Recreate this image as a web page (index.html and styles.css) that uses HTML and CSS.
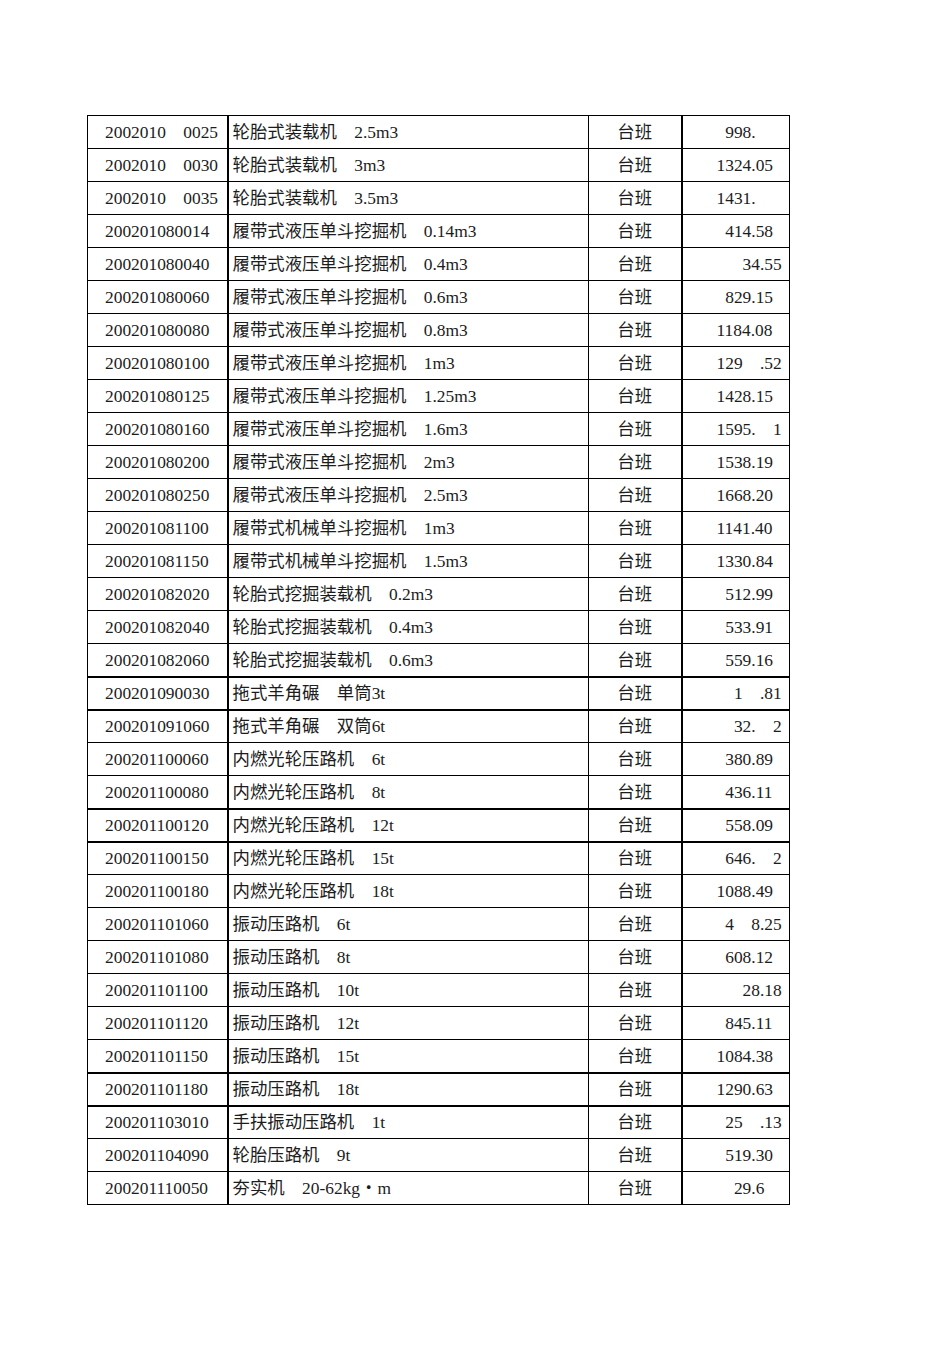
FILE: index.html
```html
<!DOCTYPE html>
<html lang="zh-CN">
<head>
<meta charset="utf-8">
<title>机械台班</title>
<link rel="stylesheet" href="styles.css">
</head>
<body>
<div class="sheet">
<table class="grid">
<colgroup><col class="c1"><col class="c2"><col class="c3"><col class="c4"></colgroup>
<tbody>
<tr><td class="code">2002010&ensp;&ensp;0025</td><td class="name">轮胎式装载机&ensp;&ensp;2.5m3</td><td class="unit">台班</td><td class="val">&ensp;998.</td></tr>
<tr><td class="code">2002010&ensp;&ensp;0030</td><td class="name">轮胎式装载机&ensp;&ensp;3m3</td><td class="unit">台班</td><td class="val">1324.05</td></tr>
<tr><td class="code">2002010&ensp;&ensp;0035</td><td class="name">轮胎式装载机&ensp;&ensp;3.5m3</td><td class="unit">台班</td><td class="val">1431.</td></tr>
<tr><td class="code">200201080014</td><td class="name">履带式液压单斗挖掘机&ensp;&ensp;0.14m3</td><td class="unit">台班</td><td class="val">&ensp;414.58</td></tr>
<tr><td class="code">200201080040</td><td class="name">履带式液压单斗挖掘机&ensp;&ensp;0.4m3</td><td class="unit">台班</td><td class="val">&ensp;&ensp;&ensp;34.55</td></tr>
<tr><td class="code">200201080060</td><td class="name">履带式液压单斗挖掘机&ensp;&ensp;0.6m3</td><td class="unit">台班</td><td class="val">&ensp;829.15</td></tr>
<tr><td class="code">200201080080</td><td class="name">履带式液压单斗挖掘机&ensp;&ensp;0.8m3</td><td class="unit">台班</td><td class="val">1184.08</td></tr>
<tr><td class="code">200201080100</td><td class="name">履带式液压单斗挖掘机&ensp;&ensp;1m3</td><td class="unit">台班</td><td class="val">129&ensp;&ensp;.52</td></tr>
<tr><td class="code">200201080125</td><td class="name">履带式液压单斗挖掘机&ensp;&ensp;1.25m3</td><td class="unit">台班</td><td class="val">1428.15</td></tr>
<tr><td class="code">200201080160</td><td class="name">履带式液压单斗挖掘机&ensp;&ensp;1.6m3</td><td class="unit">台班</td><td class="val">1595.&ensp;&ensp;1</td></tr>
<tr><td class="code">200201080200</td><td class="name">履带式液压单斗挖掘机&ensp;&ensp;2m3</td><td class="unit">台班</td><td class="val">1538.19</td></tr>
<tr><td class="code">200201080250</td><td class="name">履带式液压单斗挖掘机&ensp;&ensp;2.5m3</td><td class="unit">台班</td><td class="val">1668.20</td></tr>
<tr><td class="code">200201081100</td><td class="name">履带式机械单斗挖掘机&ensp;&ensp;1m3</td><td class="unit">台班</td><td class="val">1141.40</td></tr>
<tr><td class="code">200201081150</td><td class="name">履带式机械单斗挖掘机&ensp;&ensp;1.5m3</td><td class="unit">台班</td><td class="val">1330.84</td></tr>
<tr><td class="code">200201082020</td><td class="name">轮胎式挖掘装载机&ensp;&ensp;0.2m3</td><td class="unit">台班</td><td class="val">&ensp;512.99</td></tr>
<tr><td class="code">200201082040</td><td class="name">轮胎式挖掘装载机&ensp;&ensp;0.4m3</td><td class="unit">台班</td><td class="val">&ensp;533.91</td></tr>
<tr><td class="code">200201082060</td><td class="name">轮胎式挖掘装载机&ensp;&ensp;0.6m3</td><td class="unit">台班</td><td class="val">&ensp;559.16</td></tr>
<tr class="thick"><td class="code">200201090030</td><td class="name">拖式羊角碾&ensp;&ensp;单筒3t</td><td class="unit">台班</td><td class="val">&ensp;&ensp;1&ensp;&ensp;.81</td></tr>
<tr class="thick"><td class="code">200201091060</td><td class="name">拖式羊角碾&ensp;&ensp;双筒6t</td><td class="unit">台班</td><td class="val">&ensp;&ensp;32.&ensp;&ensp;2</td></tr>
<tr><td class="code">200201100060</td><td class="name">内燃光轮压路机&ensp;&ensp;6t</td><td class="unit">台班</td><td class="val">&ensp;380.89</td></tr>
<tr><td class="code">200201100080</td><td class="name">内燃光轮压路机&ensp;&ensp;8t</td><td class="unit">台班</td><td class="val">&ensp;436.11</td></tr>
<tr class="thick"><td class="code">200201100120</td><td class="name">内燃光轮压路机&ensp;&ensp;12t</td><td class="unit">台班</td><td class="val">&ensp;558.09</td></tr>
<tr class="thick"><td class="code">200201100150</td><td class="name">内燃光轮压路机&ensp;&ensp;15t</td><td class="unit">台班</td><td class="val">&ensp;646.&ensp;&ensp;2</td></tr>
<tr><td class="code">200201100180</td><td class="name">内燃光轮压路机&ensp;&ensp;18t</td><td class="unit">台班</td><td class="val">1088.49</td></tr>
<tr><td class="code">200201101060</td><td class="name">振动压路机&ensp;&ensp;6t</td><td class="unit">台班</td><td class="val">&ensp;4&ensp;&ensp;8.25</td></tr>
<tr><td class="code">200201101080</td><td class="name">振动压路机&ensp;&ensp;8t</td><td class="unit">台班</td><td class="val">&ensp;608.12</td></tr>
<tr><td class="code">200201101100</td><td class="name">振动压路机&ensp;&ensp;10t</td><td class="unit">台班</td><td class="val">&ensp;&ensp;&ensp;28.18</td></tr>
<tr><td class="code">200201101120</td><td class="name">振动压路机&ensp;&ensp;12t</td><td class="unit">台班</td><td class="val">&ensp;845.11</td></tr>
<tr><td class="code">200201101150</td><td class="name">振动压路机&ensp;&ensp;15t</td><td class="unit">台班</td><td class="val">1084.38</td></tr>
<tr class="thick"><td class="code">200201101180</td><td class="name">振动压路机&ensp;&ensp;18t</td><td class="unit">台班</td><td class="val">1290.63</td></tr>
<tr class="thick"><td class="code">200201103010</td><td class="name">手扶振动压路机&ensp;&ensp;1t</td><td class="unit">台班</td><td class="val">&ensp;25&ensp;&ensp;.13</td></tr>
<tr><td class="code">200201104090</td><td class="name">轮胎压路机&ensp;&ensp;9t</td><td class="unit">台班</td><td class="val">&ensp;519.30</td></tr>
<tr><td class="code">200201110050</td><td class="name">夯实机&ensp;&ensp;20-62kg・m</td><td class="unit">台班</td><td class="val">&ensp;&ensp;29.6</td></tr>
</tbody>
</table>
</div>
</body>
</html>
```

FILE: styles.css
```css
html, body {
  margin: 0;
  padding: 0;
  background: #ffffff;
}

.sheet {
  padding: 115px 0 0 87px;
}

.grid {
  border-collapse: collapse;
  table-layout: fixed;
  width: 702px;
  font-family: "Liberation Serif", "Noto Sans CJK SC", serif;
  font-size: 17.4px;
  color: #1c1c1c;
}

.c1 { width: 140px; }
.c2 { width: 361px; }
.c3 { width: 93px; }
.c4 { width: 108px; }

.grid tr {
  height: 33px;
}

.grid td {
  border: 1px solid #000;
  padding: 0;
  white-space: pre;
  overflow: hidden;
  vertical-align: middle;
  line-height: 20px;
}

.grid tr.thick td {
  border-top-width: 2px;
}

.grid td.code {
  padding-left: 17px;
  border-right-width: 2px;
}

.grid td.name {
  padding-left: 4px;
}

.grid td.unit {
  text-align: center;
  border-right-width: 2px;
}

.grid td.val {
  padding-left: 34px;
}
```
